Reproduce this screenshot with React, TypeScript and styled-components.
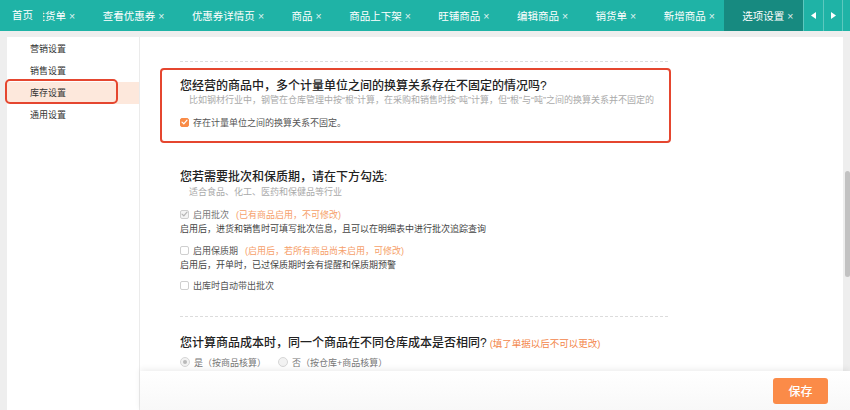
import styled, { createGlobalStyle } from "styled-components"

const GlobalStyle = createGlobalStyle`
  html, body { margin: 0; padding: 0; }
  body {
    font-family: "Liberation Sans", "Noto Sans CJK SC", sans-serif;
    background: #eeeeee;
    color: #333;
  }
  * { box-sizing: border-box; }
`

// Styles
const Page = styled.div`
  position: relative;
  width: 850px;
  height: 410px;
  overflow: hidden;
  display: flex;
  flex-direction: column;
  background: #eeeeee;
`
const TabBar = styled.div`
  display: flex;
  flex-shrink: 0;
  height: 31px;
  background: #1fb3a6;
`
const HomeTab = styled.div`
  flex-shrink: 0;
  width: 43px;
  padding-left: 12px;
  line-height: 31px;
  font-size: 10.5px;
  color: #fff;
`
const TabViewport = styled.div`
  flex: 1;
  min-width: 0;
  display: flex;
  justify-content: flex-end;
  overflow: hidden;
`
const Tab = styled.div<{ $active?: boolean }>`
  flex-shrink: 0;
  display: flex;
  align-items: center;
  gap: 3px;
  height: 100%;
  padding: 0 9.5px 0 18px;
  font-size: 10.5px;
  color: #fff;
  white-space: nowrap;
  background: ${p => p.$active ? '#178a80' : 'transparent'};
`
const Close = styled.span`
  font-size: 10.5px;
  opacity: 0.85;
`
const ArrowGroup = styled.div`
  display: flex;
  flex-shrink: 0;
  padding-right: 7px;
`
const ArrowBtn = styled.div`
  width: 20px;
  display: flex;
  align-items: center;
  justify-content: center;
  border-left: 1px solid rgba(255, 255, 255, 0.28);
  &:last-child { border-right: 1px solid rgba(255, 255, 255, 0.28); }
`
const Body = styled.div`
  flex: 1;
  min-height: 0;
  display: flex;
  padding: 6px 0 0 7px;
`
const Sidebar = styled.ul`
  width: 133px;
  flex-shrink: 0;
  margin: 0;
  padding: 1px 0 0;
  background: #fff;
  border-right: 1px solid #ebebeb;
`
const MenuItem = styled.li<{ $active?: boolean }>`
  position: relative;
  list-style: none;
  height: 22px;
  line-height: 22px;
  padding-left: 23px;
  font-size: 9px;
  color: #333;
  background: ${p => p.$active ? '#fde8dc' : 'transparent'};
  ${p => p.$active && `
    &::after {
      content: '';
      position: absolute;
      left: -2px; right: 21px; top: -3px; bottom: 0;
      border: 2px solid #e5462f;
      border-radius: 5px;
    }
  `}
`
const Content = styled.div`
  flex: 1;
  min-width: 0;
  background: #fff;
  padding: 24px 0 0 40px;
`
const Column = styled.div`
  width: 488px;
`
const Divider = styled.div`
  border-top: 1px dashed #dcdcdc;
`
const Highlight = styled.div`
  margin: 6px -3px 0 -20px;
  padding: 9px 0 12px 18px;
  border: 2px solid #e5462f;
  border-radius: 4px;
`
const Section = styled.div<{ $top: number; $bottom?: number }>`
  padding: ${p => p.$top}px 0 ${p => p.$bottom ?? 0}px;
`
const Title = styled.div`
  font-size: 12px;
  line-height: 15px;
  font-weight: 500;
  color: #222;
  white-space: nowrap;
`
const Note = styled.span<{ $light?: boolean }>`
  margin-left: 3px;
  font-size: ${p => p.$light ? 9 : 9.5}px;
  font-weight: 400;
  color: ${p => p.$light ? '#f6a06a' : '#f3864a'};
`
const Sub = styled.div<{ $mt?: number }>`
  margin-top: ${p => p.$mt ?? 0}px;
  padding-left: 9px;
  font-size: 9px;
  line-height: 12px;
  color: #aaa;
  white-space: nowrap;
`
const Desc = styled.div`
  margin-top: 2px;
  font-size: 9px;
  line-height: 12px;
  color: #444;
`
const CheckRow = styled.label<{ $mt: number; $muted?: boolean }>`
  display: flex;
  align-items: center;
  gap: 4px;
  height: 14px;
  margin-top: ${p => p.$mt}px;
  font-size: 9px;
  color: ${p => p.$muted ? '#777' : '#555'};
  white-space: nowrap;
`
const Box = styled.span<{ $state: 'on' | 'locked' | 'off' }>`
  display: flex;
  align-items: center;
  justify-content: center;
  width: 9px;
  height: 9px;
  border-radius: 2px;
  border: 1px solid ${p => p.$state === 'on' ? '#f98b47' : '#cfcfcf'};
  background: ${p => p.$state === 'on' ? '#f98b47' : p.$state === 'locked' ? '#f4f4f4' : '#fff'};
`
const RadioRow = styled.div`
  display: flex;
  align-items: center;
  gap: 12px;
  height: 14px;
  margin-top: 4px;
`
const Radio = styled.label`
  display: flex;
  align-items: center;
  gap: 4px;
  font-size: 9px;
  color: #777;
  white-space: nowrap;
`
const Dot = styled.span<{ $checked?: boolean }>`
  display: flex;
  align-items: center;
  justify-content: center;
  width: 10px;
  height: 10px;
  border-radius: 50%;
  border: 1px solid #d6d6d6;
  background: #f2f2f2;
  &::after {
    content: '';
    display: ${p => p.$checked ? 'block' : 'none'};
    width: 4px;
    height: 4px;
    border-radius: 50%;
    background: #b9b9b9;
  }
`
const ScrollTrack = styled.div`
  width: 7px;
  flex-shrink: 0;
  background: #eeeeee;
`
const Thumb = styled.div`
  width: 5px;
  height: 106px;
  margin: 134px 0 0 2px;
  border-radius: 3px;
  background: #c2c2c2;
`
const Footer = styled.div`
  position: absolute;
  left: 140px; right: 0; bottom: 0;
  height: 39px;
  display: flex;
  align-items: center;
  justify-content: flex-end;
  padding-right: 22px;
  background: linear-gradient(#fff, #f8f8f8);
  box-shadow: 0 -2px 6px rgba(0, 0, 0, 0.07);
`
const SaveBtn = styled.button`
  width: 55px;
  height: 26px;
  border: none;
  border-radius: 3px;
  background: #fb8b48;
  color: #fff;
  font-family: inherit;
  font-size: 12px;
  font-weight: 500;
`

const tabs = ['进货单', '查看优惠券', '优惠券详情页', '商品', '商品上下架', '旺铺商品', '编辑商品', '销货单', '新增商品']
const menu = ['营销设置', '销售设置', '库存设置', '通用设置']

const Check = ({ color }: { color: string }) => (
  <svg width="7" height="6" viewBox="0 0 7 6">
    <path d="M1 3.1 L2.8 4.8 L6 1.2" fill="none" stroke={color} strokeWidth="1.2" strokeLinecap="round" strokeLinejoin="round" />
  </svg>
)

const Arrow = ({ dir }: { dir: 'left' | 'right' }) => (
  <svg width="5" height="7" viewBox="0 0 5 7">
    <path d={dir === 'left' ? 'M5 0 L0 3.5 L5 7 Z' : 'M0 0 L5 3.5 L0 7 Z'} fill="#fff" />
  </svg>
)

const App: React.FC = () => {
  return (
    <Page>
      <GlobalStyle />
      <TabBar>
        <HomeTab>首页</HomeTab>
        <TabViewport>
          {tabs.map(t => <Tab key={t}>{t}<Close>×</Close></Tab>)}
          <Tab $active>选项设置<Close>×</Close></Tab>
        </TabViewport>
        <ArrowGroup>
          <ArrowBtn><Arrow dir="left" /></ArrowBtn>
          <ArrowBtn><Arrow dir="right" /></ArrowBtn>
        </ArrowGroup>
      </TabBar>

      <Body>
        <Sidebar>
          {menu.map(m => <MenuItem key={m} $active={m === '库存设置'}>{m}</MenuItem>)}
        </Sidebar>

        <Content>
          <Column>
            <Divider />
            <Highlight>
              <Title>您经营的商品中，多个计量单位之间的换算关系存在不固定的情况吗?</Title>
              <Sub>比如钢材行业中，钢管在仓库管理中按“根”计算，在采购和销售时按“吨”计算，但“根”与“吨”之间的换算关系并不固定的</Sub>
              <CheckRow $mt={9}>
                <Box $state="on"><Check color="#fff" /></Box>
                存在计量单位之间的换算关系不固定。
              </CheckRow>
            </Highlight>

            <Section $top={27} $bottom={24}>
              <Title>您若需要批次和保质期，请在下方勾选:</Title>
              <Sub $mt={1}>适合食品、化工、医药和保健品等行业</Sub>
              <CheckRow $mt={9} $muted>
                <Box $state="locked"><Check color="#b5b5b5" /></Box>
                启用批次<Note $light>(已有商品启用，不可修改)</Note>
              </CheckRow>
              <Desc>启用后，进货和销售时可填写批次信息，且可以在明细表中进行批次追踪查询</Desc>
              <CheckRow $mt={8}>
                <Box $state="off" />
                启用保质期<Note $light>(启用后，若所有商品尚未启用，可修改)</Note>
              </CheckRow>
              <Desc>启用后，开单时，已过保质期时会有提醒和保质期预警</Desc>
              <CheckRow $mt={7}>
                <Box $state="off" />
                出库时自动带出批次
              </CheckRow>
            </Section>
            <Divider />

            <Section $top={19}>
              <Title>您计算商品成本时，同一个商品在不同仓库成本是否相同?<Note>(填了单据以后不可以更改)</Note></Title>
              <RadioRow>
                <Radio><Dot $checked />是（按商品核算）</Radio>
                <Radio><Dot />否（按仓库+商品核算）</Radio>
              </RadioRow>
            </Section>
          </Column>
        </Content>

        <ScrollTrack><Thumb /></ScrollTrack>
      </Body>

      <Footer>
        <SaveBtn>保存</SaveBtn>
      </Footer>
    </Page>
  )
}

export default App
